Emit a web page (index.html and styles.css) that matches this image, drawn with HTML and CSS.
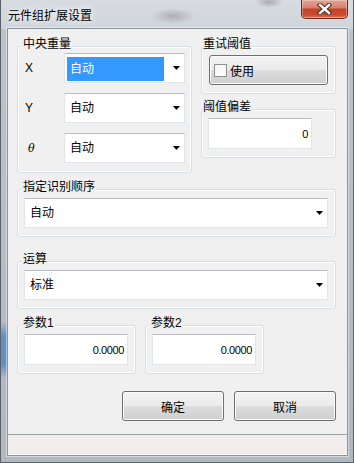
FILE: index.html
```html
<!DOCTYPE html>
<html lang="zh-CN">
<head>
    <meta charset="UTF-8">
    <title>元件组扩展设置</title>
    <link rel="stylesheet" href="styles.css">
</head>
<body>
<div class="window">
    <div class="titlebar">
        <span class="titlebar__text">元件组扩展设置</span>
        <button class="titlebar__close" aria-label="关闭">
            <svg width="15" height="12" viewBox="0 0 15 12">
                <path d="M3 2 L12 10 M12 2 L3 10" stroke="#4a2a24" stroke-width="4.4" stroke-linecap="square" fill="none"/>
                <path d="M3 2 L12 10 M12 2 L3 10" stroke="#fff" stroke-width="2.4" stroke-linecap="square" fill="none"/>
            </svg>
        </button>
    </div>

    <div class="client">
        <div class="dialog">

            <div class="top-row">
                <div class="group group--center">
                    <span class="group__title group__title--near">中央重量</span>
                    <div class="field-list">
                        <div class="field-row">
                            <span class="field-row__label">X</span>
                            <div class="combo">
                                <span class="combo__value combo__value--selected">自动</span>
                                <span class="combo__arrow"></span>
                            </div>
                        </div>
                        <div class="field-row">
                            <span class="field-row__label">Y</span>
                            <div class="combo">
                                <span class="combo__value">自动</span>
                                <span class="combo__arrow"></span>
                            </div>
                        </div>
                        <div class="field-row">
                            <span class="field-row__label field-row__label--theta">θ</span>
                            <div class="combo">
                                <span class="combo__value">自动</span>
                                <span class="combo__arrow"></span>
                            </div>
                        </div>
                    </div>
                </div>

                <div class="side">
                    <div class="group group--side">
                        <span class="group__title">重试阈值</span>
                        <button class="btn btn--check"><span class="checkbox"></span>使用</button>
                    </div>
                    <div class="group group--side">
                        <span class="group__title">阈值偏差</span>
                        <div class="edit">0</div>
                    </div>
                </div>
            </div>

            <div class="group group--full">
                <span class="group__title">指定识别顺序</span>
                <div class="combo">
                    <span class="combo__value">自动</span>
                    <span class="combo__arrow"></span>
                </div>
            </div>

            <div class="group group--full group--spaced">
                <span class="group__title">运算</span>
                <div class="combo">
                    <span class="combo__value">标准</span>
                    <span class="combo__arrow"></span>
                </div>
            </div>

            <div class="param-row">
                <div class="group">
                    <span class="group__title">参数1</span>
                    <div class="edit">0.0000</div>
                </div>
                <div class="group">
                    <span class="group__title">参数2</span>
                    <div class="edit">0.0000</div>
                </div>
            </div>

            <div class="actions">
                <button class="btn btn--action">确定</button>
                <button class="btn btn--action">取消</button>
            </div>
        </div>
        <div class="statusbar"></div>
    </div>
</div>
</body>
</html>
```

FILE: styles.css
```css
* { box-sizing: border-box; }

html, body { margin: 0; }

body {
  width: 354px;
  height: 463px;
  overflow: hidden;
  font-family: "Liberation Sans", "Noto Sans CJK SC", sans-serif;
  font-size: 12px;
  color: #000;
  background: #b4bbc2;
}

/* window frame */
.window {
  display: flex;
  flex-direction: column;
  width: 354px;
  height: 463px;
  border: 1px solid #59616a;
  border-top: 0;
  background:
    linear-gradient(to bottom, transparent 322px, rgba(45, 115, 195, .6) 336px, rgba(45, 115, 195, .6) 364px, transparent 378px) left top / 6px 100% no-repeat,
    linear-gradient(to bottom, #d8dce1 0, #cfd5db 28px, #bcc3ca 30px, #b0b7bf 100%);
}

.titlebar {
  display: flex;
  justify-content: space-between;
  align-items: flex-start;
  height: 28px;
  padding: 0 5px 0 7px;
  background:
    radial-gradient(ellipse 22px 8px at 172px 16px, rgba(80, 80, 80, .3), transparent),
    radial-gradient(ellipse 14px 6px at 268px 2px, rgba(80, 80, 80, .35), transparent);
}

.titlebar__text {
  padding-top: 8px;
  line-height: 16px;
  text-shadow: 0 0 6px rgba(255, 255, 255, .9), 0 0 10px rgba(255, 255, 255, .8);
}

.titlebar__close {
  display: flex;
  align-items: center;
  justify-content: center;
  width: 47px;
  height: 19px;
  margin: 0;
  padding: 0;
  border: 1px solid #6e2b22;
  border-top: 0;
  border-radius: 0 0 5px 5px;
  background: linear-gradient(#e4a493, #d58270 42%, #c4432a 52%, #cb4b30 82%, #df7358);
  box-shadow: inset 0 0 0 1px rgba(255, 255, 255, .3);
}

.client {
  display: flex;
  flex-direction: column;
  height: 428px;
  margin: 0 5px 0 6px;
  border: 1px solid #8b939b;
  background: #f0f0f0;
  box-shadow: 0 0 0 1px rgba(255, 255, 255, .45);
}

.dialog {
  flex: 1;
  display: flex;
  flex-direction: column;
  padding: 17px 11px 0 9px;
}

.statusbar {
  height: 21px;
  border-top: 1px solid #a0a0a0;
  background: #f1eeed;
  box-shadow: inset 0 -1px #fff;
}

/* group boxes */
.group {
  display: flex;
  flex-direction: column;
  border: 1px solid #d5dfe5;
  border-radius: 3px;
  box-shadow: inset 0 0 0 1px #fff;
  padding: 0 7px 8px 6px;
}

.group__title {
  align-self: flex-start;
  margin: -11px 0 3px -2px;
  padding: 0 1px;
  line-height: 16px;
  background: #f0f0f0;
}

.group__title--near { margin-bottom: 1px; }

.group--center { padding-bottom: 9px; }

.group--side { padding: 0 7px 8px 6px; }
.group--side .group__title { margin-left: -6px; }

.group--full { margin-top: 16px; }
.group--spaced { margin-top: 24px; }

.top-row {
  display: grid;
  grid-template-columns: 175px 1fr;
  gap: 9px;
  align-items: start;
}

.side {
  display: flex;
  flex-direction: column;
  gap: 15px;
}

.field-list {
  display: grid;
  gap: 10px;
}

.field-row {
  display: grid;
  grid-template-columns: 40px 121px;
  align-items: center;
}

.field-row__label { padding-left: 1px; }
.field-row__label--theta {
  padding-left: 4px;
  font-style: italic;
  font-family: "DejaVu Serif", serif;
  font-size: 11px;
}

/* combo box */
.combo {
  display: flex;
  align-items: center;
  height: 30px;
  padding: 0 4px 0 2px;
  background: #fff;
  border: 1px solid #e2e6ea;
  border-top-color: #b8bcc1;
}

.combo__value {
  flex: 1;
  padding: 0 3px;
  line-height: 24px;
}

.combo__value--selected {
  margin-top: 2px;
  background: #3399ff;
  color: #fff;
}

.combo__arrow {
  width: 7px;
  height: 4px;
  margin-left: 9px;
  background: #000;
  clip-path: polygon(0 0, 100% 0, 50% 100%);
}

/* edit box */
.edit {
  display: flex;
  align-items: center;
  justify-content: flex-end;
  width: 104px;
  height: 31px;
  padding: 0 3px;
  background: #fff;
  border: 1px solid #e2e6ea;
  border-top-color: #b8bcc1;
  font-size: 11px;
  letter-spacing: -0.4px;
}

.param-row {
  display: grid;
  grid-template-columns: 119px 119px;
  gap: 9px;
  margin-top: 16px;
}

/* buttons */
.btn {
  height: 30px;
  margin: 0;
  padding: 0;
  font: inherit;
  color: #000;
  border: 1px solid #707070;
  border-radius: 3px;
  background: linear-gradient(#f2f2f2, #ebebeb 50%, #dddddd 50%, #cfcfcf);
  box-shadow: inset 0 0 0 1px #fcfcfc;
}

.btn--check {
  display: flex;
  align-items: center;
  margin-left: 1px;
  padding-left: 4px;
}

.checkbox {
  width: 13px;
  height: 13px;
  margin-right: 3px;
  border: 1px solid #8e8f8f;
  background: linear-gradient(135deg, #f4f4f4, #fff);
}

.actions {
  display: flex;
  justify-content: flex-end;
  gap: 10px;
  margin-top: 17px;
}

.btn--action { width: 102px; }
```
